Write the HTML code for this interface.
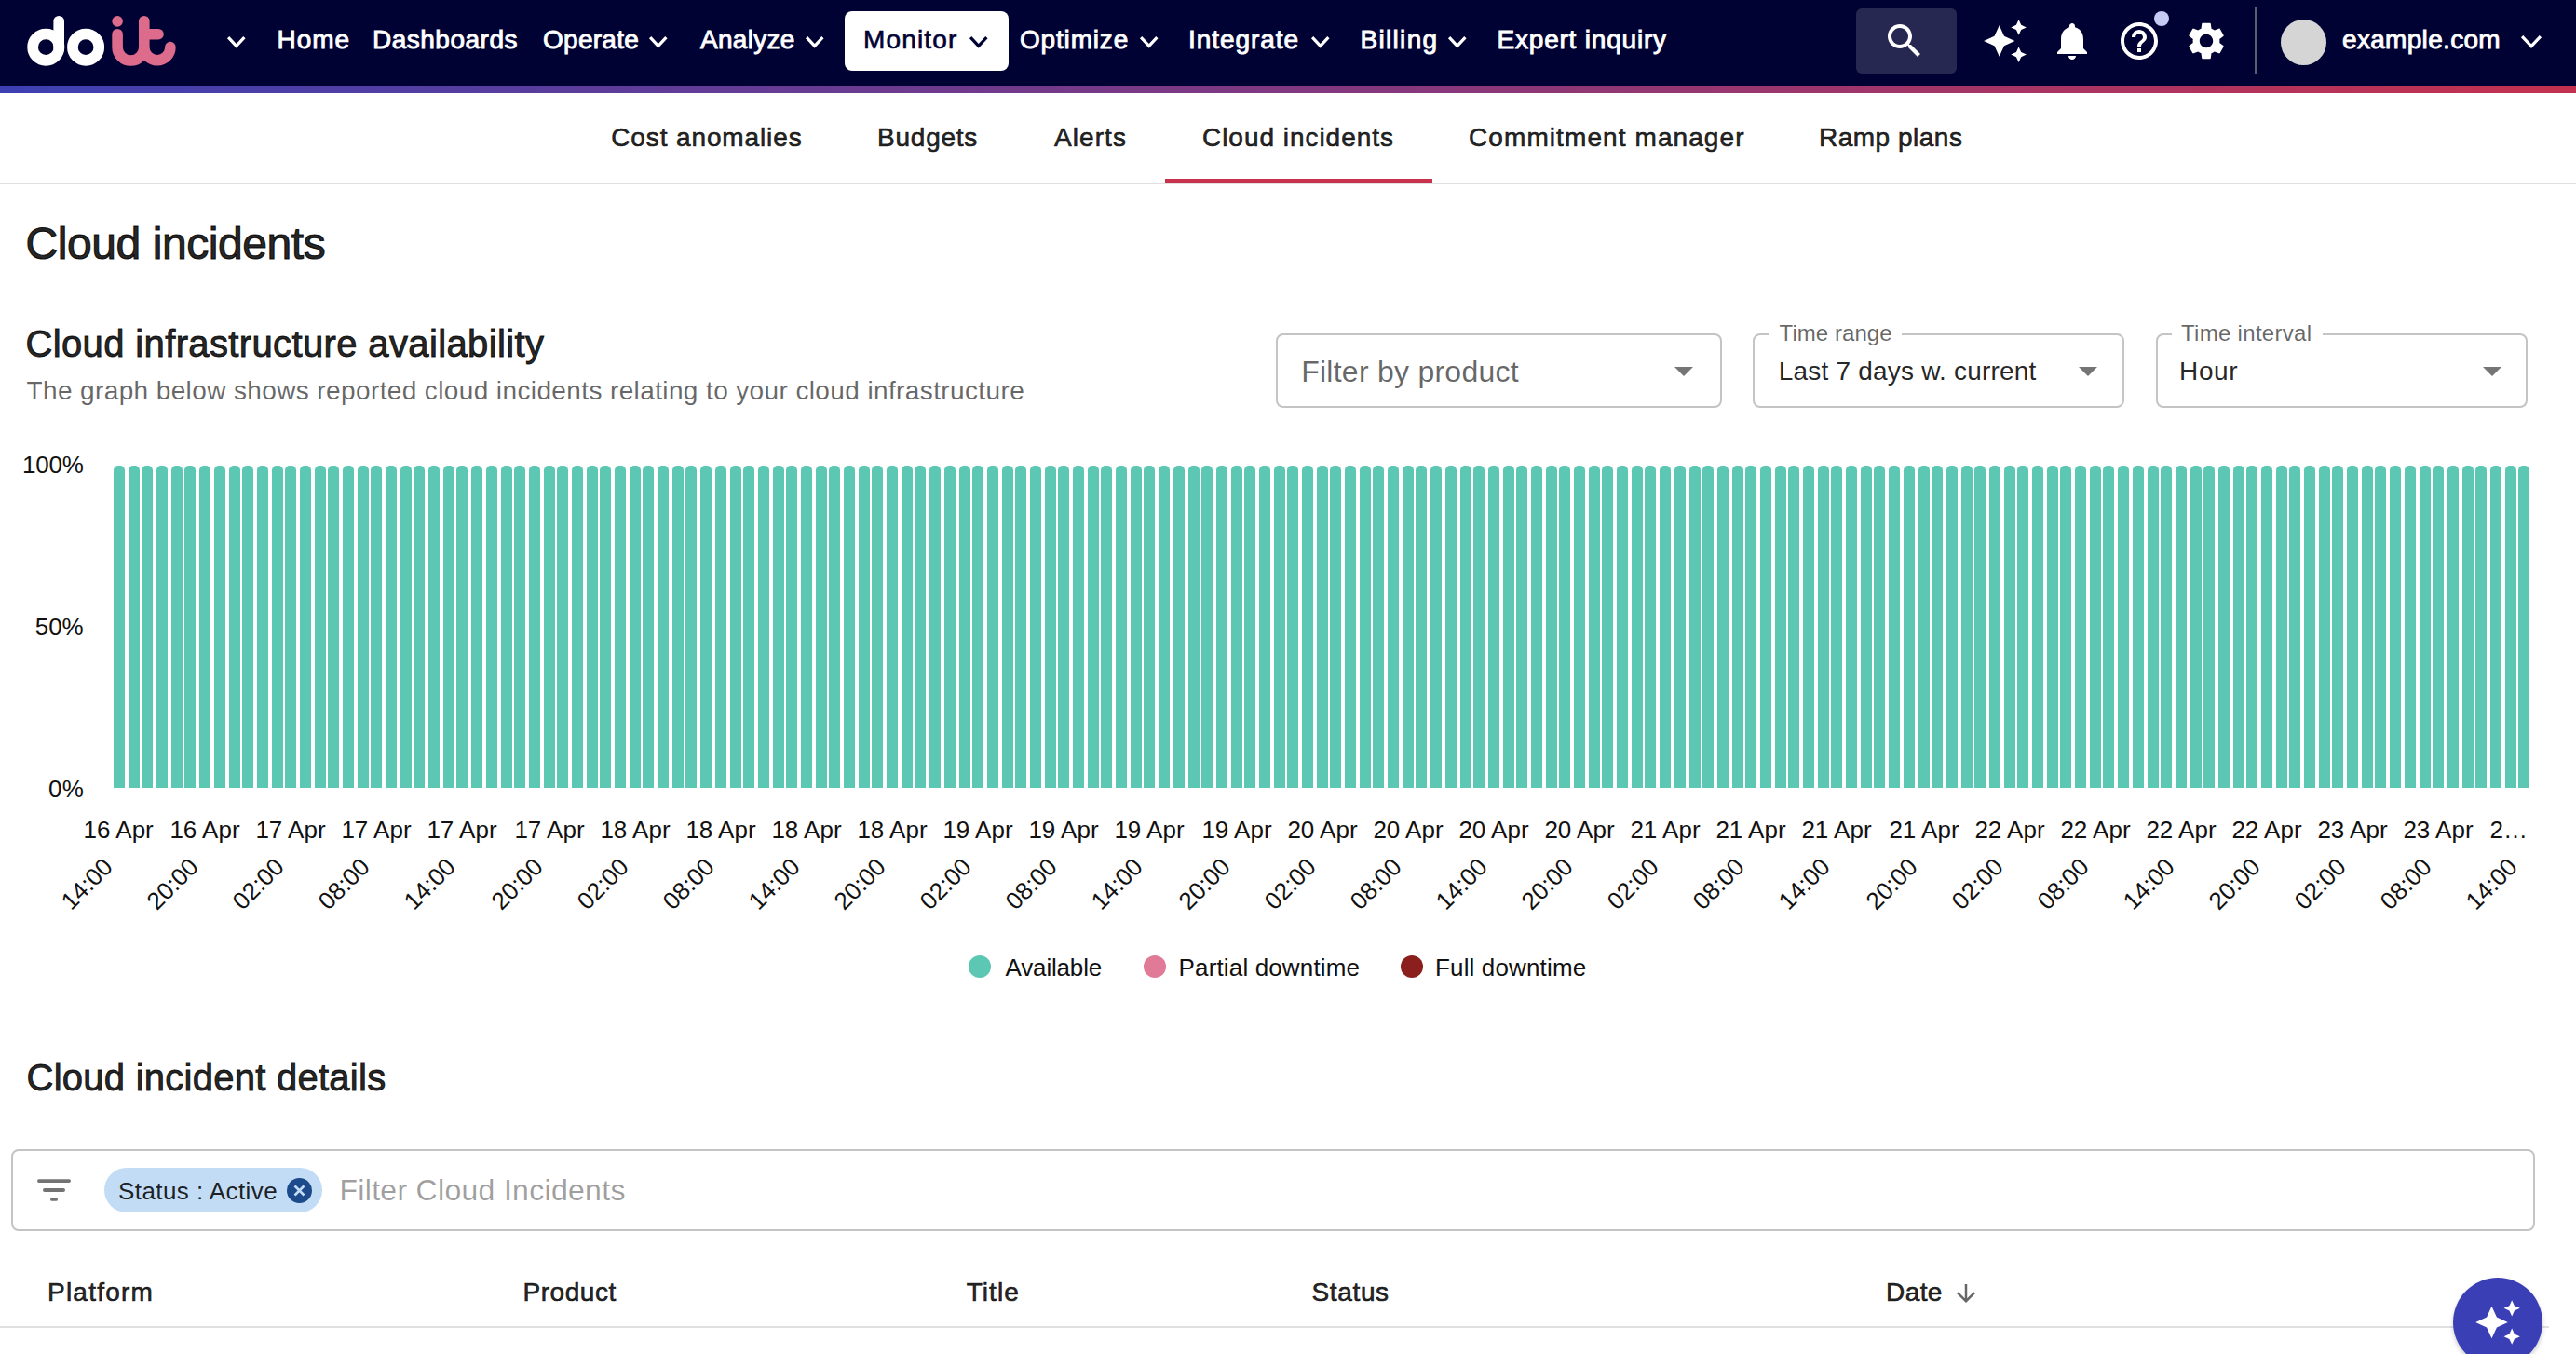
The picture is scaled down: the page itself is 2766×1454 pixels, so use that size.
<!DOCTYPE html><html><head><meta charset="utf-8"><title>Cloud incidents</title><style>
*{margin:0;padding:0;box-sizing:border-box}
html,body{width:2766px;height:1454px;overflow:hidden;background:#fff}
body{position:relative;font-family:"Liberation Sans",sans-serif;color:rgba(0,0,0,0.87)}
.a{position:absolute}
.t{position:absolute;white-space:nowrap;line-height:1}
.nav{position:absolute;left:0;top:0;width:2766px;height:92px;background:#000234}
.grad{position:absolute;left:0;top:92px;width:2766px;height:8px;background:linear-gradient(90deg,#3d40b2 0%,#c4314f 100%)}
.nt{color:#fff;font-size:28px;font-weight:bold}
.med{font-weight:normal;-webkit-text-stroke:0.7px currentColor}
</style></head><body>
<div class="nav"></div><div class="grad"></div>
<svg class="a" style="left:0;top:0" width="200" height="92" viewBox="0 0 200 92">
<g fill="none" stroke-linecap="round" stroke-width="11.6">
<circle cx="49.3" cy="50.65" r="14.2" stroke="#fff"/>
<line x1="63.2" y1="22.7" x2="63.2" y2="52" stroke="#fff"/>
<circle cx="92.1" cy="50.65" r="14.2" stroke="#fff"/>
<path d="M126.1 36.7 V50.65 A14.35 14.35 0 0 0 154.8 50.65 V22.7 M154.8 50.65 A14.05 14.05 0 0 0 182.9 50.65" stroke="#dd6b8b"/>
<line x1="154.8" y1="36.7" x2="170" y2="36.7" stroke="#dd6b8b"/>
</g>
<circle cx="126.1" cy="22.9" r="5.8" fill="#dd6b8b"/>
</svg>
<svg class="a" style="left:241px;top:36px" width="25.5" height="17.7" viewBox="-3 -3 25.5 17.7"><path d="M1.1 1.1 L9.75 10.399999999999999 L18.4 1.1" fill="none" stroke="#fff" stroke-width="3.2"/></svg>
<div id="nav0" class="t" style="left:297.40px;top:29.30px;font-size:28px;font-weight:normal;-webkit-text-stroke:0.90px currentColor;color:#fff;letter-spacing:1.020px;">Home</div>
<div id="nav1" class="t" style="left:400.00px;top:29.30px;font-size:28px;font-weight:normal;-webkit-text-stroke:0.90px currentColor;color:#fff;letter-spacing:0.500px;">Dashboards</div>
<div id="nav2" class="t" style="left:583.00px;top:29.30px;font-size:28px;font-weight:normal;-webkit-text-stroke:0.90px currentColor;color:#fff;letter-spacing:0.270px;">Operate</div>
<svg class="a" style="left:694.2px;top:36px" width="25.5" height="17.7" viewBox="-3 -3 25.5 17.7"><path d="M1.1 1.1 L9.75 10.399999999999999 L18.4 1.1" fill="none" stroke="#fff" stroke-width="3.2"/></svg>
<div id="nav3" class="t" style="left:752.00px;top:29.30px;font-size:28px;font-weight:normal;-webkit-text-stroke:0.90px currentColor;color:#fff;letter-spacing:0.300px;">Analyze</div>
<svg class="a" style="left:862.3px;top:36px" width="25.5" height="17.7" viewBox="-3 -3 25.5 17.7"><path d="M1.1 1.1 L9.75 10.399999999999999 L18.4 1.1" fill="none" stroke="#fff" stroke-width="3.2"/></svg>
<div id="nav4" class="t" style="left:1095.00px;top:29.30px;font-size:28px;font-weight:normal;-webkit-text-stroke:0.90px currentColor;color:#fff;letter-spacing:0.823px;">Optimize</div>
<svg class="a" style="left:1221px;top:36px" width="25.5" height="17.7" viewBox="-3 -3 25.5 17.7"><path d="M1.1 1.1 L9.75 10.399999999999999 L18.4 1.1" fill="none" stroke="#fff" stroke-width="3.2"/></svg>
<div id="nav5" class="t" style="left:1276.00px;top:29.30px;font-size:28px;font-weight:normal;-webkit-text-stroke:0.90px currentColor;color:#fff;letter-spacing:0.956px;">Integrate</div>
<svg class="a" style="left:1405.1px;top:36px" width="25.5" height="17.7" viewBox="-3 -3 25.5 17.7"><path d="M1.1 1.1 L9.75 10.399999999999999 L18.4 1.1" fill="none" stroke="#fff" stroke-width="3.2"/></svg>
<div id="nav6" class="t" style="left:1460.50px;top:29.30px;font-size:28px;font-weight:normal;-webkit-text-stroke:0.90px currentColor;color:#fff;letter-spacing:1.320px;">Billing</div>
<svg class="a" style="left:1551.6px;top:36px" width="25.5" height="17.7" viewBox="-3 -3 25.5 17.7"><path d="M1.1 1.1 L9.75 10.399999999999999 L18.4 1.1" fill="none" stroke="#fff" stroke-width="3.2"/></svg>
<div id="nav7" class="t" style="left:1607.50px;top:29.30px;font-size:28px;font-weight:normal;-webkit-text-stroke:0.90px currentColor;color:#fff;letter-spacing:0.796px;">Expert inquiry</div>
<div class="a" style="left:907px;top:12px;width:176px;height:64px;background:#fff;border-radius:8px"></div>
<div id="navM" class="t" style="left:927.00px;top:29.30px;font-size:28px;font-weight:normal;-webkit-text-stroke:0.64px currentColor;color:#000234;letter-spacing:1.140px;">Monitor</div>
<svg class="a" style="left:1038.2px;top:36px" width="25.5" height="17.7" viewBox="-3 -3 25.5 17.7"><path d="M1.1 1.1 L9.75 10.399999999999999 L18.4 1.1" fill="none" stroke="#000234" stroke-width="3.2"/></svg>
<div class="a" style="left:1993px;top:9px;width:108px;height:70px;background:#272852;border-radius:6px"></div>
<svg class="a" style="left:2021px;top:20px" width="48" height="48" viewBox="0 0 24 24"><path fill="#fff" d="M15.5 14h-.79l-.28-.27C15.41 12.59 16 11.11 16 9.5 16 5.91 13.09 3 9.5 3S3 5.91 3 9.5 5.91 16 9.5 16c1.61 0 3.09-.59 4.23-1.57l.27.28v.79l5 4.99L20.49 19l-4.99-5zm-6 0C7.01 14 5 11.99 5 9.5S7.01 5 9.5 5 14 7.01 14 9.5 11.99 14 9.5 14z"/></svg>
<svg class="a" style="left:2128px;top:19px" width="50" height="50" viewBox="0 0 24 24"><path fill="#fff" d="M19 9l1.25-2.75L23 5l-2.75-1.25L19 1l-1.25 2.75L15 5l2.75 1.25L19 9zm-7.5.5L9 4 6.5 9.5 1 12l5.5 2.5L9 20l2.5-5.5L17 12l-5.5-2.5zM19 15l-1.25 2.75L15 19l2.75 1.25L19 23l1.25-2.75L23 19l-2.75-1.25L19 15z"/></svg>
<svg class="a" style="left:2201px;top:20px" width="48" height="48" viewBox="0 0 24 24"><path fill="#fff" d="M12 22c1.1 0 2-.9 2-2h-4c0 1.1.89 2 2 2zm6-6v-5c0-3.07-1.64-5.64-4.5-6.32V4c0-.83-.67-1.5-1.5-1.5s-1.5.67-1.5 1.5v.68C7.63 5.36 6 7.92 6 11v5l-2 2v1h16v-1l-2-2z"/></svg>
<svg class="a" style="left:2273px;top:20px" width="48" height="48" viewBox="0 0 24 24"><path fill="#fff" d="M11 18h2v-2h-2v2zm1-16C6.48 2 2 6.48 2 12s4.48 10 10 10 10-4.48 10-10S17.52 2 12 2zm0 18c-4.41 0-8-3.59-8-8s3.59-8 8-8 8 3.59 8 8-3.59 8-8 8zm0-14c-2.21 0-4 1.79-4 4h2c0-1.1.9-2 2-2s2 .9 2 2c0 2-3 1.75-3 5h2c0-2.25 3-2.5 3-5 0-2.21-1.79-4-4-4z"/></svg>
<div class="a" style="left:2313px;top:12px;width:16px;height:16px;border-radius:50%;background:#c5cbf5"></div>
<svg class="a" style="left:2345px;top:20px" width="48" height="48" viewBox="0 0 24 24"><path fill="#fff" d="M19.14 12.94c.04-.3.06-.61.06-.94 0-.32-.02-.64-.07-.94l2.03-1.58c.18-.14.23-.41.12-.61l-1.92-3.32c-.12-.22-.37-.29-.59-.22l-2.39.96c-.5-.38-1.03-.7-1.62-.94l-.36-2.54c-.04-.24-.24-.41-.48-.41h-3.84c-.24 0-.43.17-.47.41l-.36 2.54c-.59.24-1.13.57-1.62.94l-2.39-.96c-.22-.08-.47 0-.59.22L2.74 8.87c-.12.21-.08.47.12.61l2.03 1.58c-.05.3-.09.63-.09.94s.02.64.07.94l-2.03 1.58c-.18.14-.23.41-.12.61l1.92 3.32c.12.22.37.29.59.22l2.39-.96c.5.38 1.03.7 1.62.94l.36 2.54c.05.24.24.41.48.41h3.84c.24 0 .44-.17.47-.41l.36-2.54c.59-.24 1.13-.56 1.62-.94l2.39.96c.22.08.47 0 .59-.22l1.92-3.32c.12-.22.07-.47-.12-.61l-2.01-1.58zM12 15.6c-1.98 0-3.6-1.62-3.6-3.6s1.62-3.6 3.6-3.6 3.6 1.62 3.6 3.6-1.62 3.6-3.6 3.6z"/></svg>
<div class="a" style="left:2421px;top:8px;width:2px;height:72px;background:#5e5e6e"></div>
<div class="a" style="left:2449px;top:21px;width:49px;height:49px;border-radius:50%;background:#d5d5d5"></div>
<div id="email" class="t" style="left:2515.00px;top:29.10px;font-size:28px;font-weight:normal;-webkit-text-stroke:0.90px currentColor;color:#fff;letter-spacing:0.315px;">example.com</div>
<svg class="a" style="left:2704px;top:35px" width="28" height="19" viewBox="-3 -3 28 19"><path d="M1.1 1.1 L11.0 11.7 L20.9 1.1" fill="none" stroke="#fff" stroke-width="3.2"/></svg>
<div id="tab0" class="t" style="left:656.20px;top:134.30px;font-size:28px;font-weight:normal;-webkit-text-stroke:0.64px currentColor;color:rgba(0,0,0,0.87);letter-spacing:0.886px;">Cost anomalies</div>
<div id="tab1" class="t" style="left:942.10px;top:134.30px;font-size:28px;font-weight:normal;-webkit-text-stroke:0.64px currentColor;color:rgba(0,0,0,0.87);letter-spacing:0.750px;">Budgets</div>
<div id="tab2" class="t" style="left:1132.00px;top:134.30px;font-size:28px;font-weight:normal;-webkit-text-stroke:0.64px currentColor;color:rgba(0,0,0,0.87);letter-spacing:1.080px;">Alerts</div>
<div id="tab3" class="t" style="left:1291.00px;top:133.90px;font-size:28px;font-weight:normal;-webkit-text-stroke:0.64px currentColor;color:rgba(0,0,0,0.87);letter-spacing:0.964px;">Cloud incidents</div>
<div id="tab4" class="t" style="left:1577.00px;top:134.30px;font-size:28px;font-weight:normal;-webkit-text-stroke:0.64px currentColor;color:rgba(0,0,0,0.87);letter-spacing:1.091px;">Commitment manager</div>
<div id="tab5" class="t" style="left:1953.00px;top:134.30px;font-size:28px;font-weight:normal;-webkit-text-stroke:0.64px currentColor;color:rgba(0,0,0,0.87);letter-spacing:0.500px;">Ramp plans</div>
<div class="a" style="left:1251px;top:192px;width:287px;height:4px;background:#c8324d"></div>
<div class="a" style="left:0;top:196px;width:2766px;height:2px;background:#e0e0e0"></div>
<div id="h1" class="t" style="left:27.50px;top:237.87px;font-size:48px;font-weight:normal;-webkit-text-stroke:1.10px currentColor;color:rgba(0,0,0,0.87);letter-spacing:-0.424px;">Cloud incidents</div>
<div id="h2" class="t" style="left:27.50px;top:348.64px;font-size:40px;font-weight:normal;-webkit-text-stroke:0.92px currentColor;color:rgba(0,0,0,0.87);letter-spacing:0.366px;">Cloud infrastructure availability</div>
<div id="sub" class="t" style="left:28.50px;top:406.30px;font-size:28px;color:rgba(0,0,0,0.6);letter-spacing:0.380px;">The graph below shows reported cloud incidents relating to your cloud infrastructure</div>
<div class="a" style="left:1370px;top:358px;width:479px;height:80px;border:2px solid #c4c4c4;border-radius:8px"></div><div id="s1v" class="t" style="left:1397.20px;top:383.41px;font-size:32px;color:rgba(0,0,0,0.6);letter-spacing:0.253px;">Filter by product</div><svg class="a" style="left:1798px;top:394px" width="20" height="12" viewBox="0 0 20 12"><path d="M0 0 H20 L10 10 Z" fill="rgba(0,0,0,0.54)"/></svg>
<div class="a" style="left:1882px;top:358px;width:399px;height:80px;border:2px solid #c4c4c4;border-radius:8px"></div><div class="a" style="left:1899px;top:350px;width:143px;height:14px;background:#fff"></div><div id="s2l" class="t" style="left:1910.60px;top:345.88px;font-size:24px;color:rgba(0,0,0,0.6);letter-spacing:0.060px;">Time range</div><div id="s2v" class="t" style="left:1909.80px;top:384.80px;font-size:28px;color:rgba(0,0,0,0.87);letter-spacing:0.197px;">Last 7 days w. current</div><svg class="a" style="left:2232px;top:394px" width="20" height="12" viewBox="0 0 20 12"><path d="M0 0 H20 L10 10 Z" fill="rgba(0,0,0,0.54)"/></svg>
<div class="a" style="left:2315px;top:358px;width:399px;height:80px;border:2px solid #c4c4c4;border-radius:8px"></div><div class="a" style="left:2332px;top:350px;width:162px;height:14px;background:#fff"></div><div id="s3l" class="t" style="left:2342.00px;top:345.88px;font-size:24px;color:rgba(0,0,0,0.6);letter-spacing:0.300px;">Time interval</div><div id="s3v" class="t" style="left:2340.00px;top:384.80px;font-size:28px;color:rgba(0,0,0,0.87);letter-spacing:0.660px;">Hour</div><svg class="a" style="left:2666px;top:394px" width="20" height="12" viewBox="0 0 20 12"><path d="M0 0 H20 L10 10 Z" fill="rgba(0,0,0,0.54)"/></svg>
<svg class="a" style="left:0;top:0" width="2766" height="1000"><path fill="#5cc7b3" d="M122 846V505a5 5 0 0 1 5 -5h2a5 5 0 0 1 5 5V846ZM138 846V505a5 5 0 0 1 5 -5h2a5 5 0 0 1 5 5V846ZM152 846V505a5 5 0 0 1 5 -5h2a5 5 0 0 1 5 5V846ZM168 846V505a5 5 0 0 1 5 -5h2a5 5 0 0 1 5 5V846ZM184 846V505a5 5 0 0 1 5 -5h2a5 5 0 0 1 5 5V846ZM198 846V505a5 5 0 0 1 5 -5h2a5 5 0 0 1 5 5V846ZM214 846V505a5 5 0 0 1 5 -5h2a5 5 0 0 1 5 5V846ZM230 846V505a5 5 0 0 1 5 -5h2a5 5 0 0 1 5 5V846ZM246 846V505a5 5 0 0 1 5 -5h2a5 5 0 0 1 5 5V846ZM260 846V505a5 5 0 0 1 5 -5h2a5 5 0 0 1 5 5V846ZM276 846V505a5 5 0 0 1 5 -5h2a5 5 0 0 1 5 5V846ZM292 846V505a5 5 0 0 1 5 -5h2a5 5 0 0 1 5 5V846ZM306 846V505a5 5 0 0 1 5 -5h2a5 5 0 0 1 5 5V846ZM322 846V505a5 5 0 0 1 5 -5h2a5 5 0 0 1 5 5V846ZM338 846V505a5 5 0 0 1 5 -5h2a5 5 0 0 1 5 5V846ZM352 846V505a5 5 0 0 1 5 -5h2a5 5 0 0 1 5 5V846ZM368 846V505a5 5 0 0 1 5 -5h2a5 5 0 0 1 5 5V846ZM384 846V505a5 5 0 0 1 5 -5h2a5 5 0 0 1 5 5V846ZM398 846V505a5 5 0 0 1 5 -5h2a5 5 0 0 1 5 5V846ZM414 846V505a5 5 0 0 1 5 -5h2a5 5 0 0 1 5 5V846ZM430 846V505a5 5 0 0 1 5 -5h2a5 5 0 0 1 5 5V846ZM444 846V505a5 5 0 0 1 5 -5h2a5 5 0 0 1 5 5V846ZM460 846V505a5 5 0 0 1 5 -5h2a5 5 0 0 1 5 5V846ZM476 846V505a5 5 0 0 1 5 -5h2a5 5 0 0 1 5 5V846ZM490 846V505a5 5 0 0 1 5 -5h2a5 5 0 0 1 5 5V846ZM506 846V505a5 5 0 0 1 5 -5h2a5 5 0 0 1 5 5V846ZM522 846V505a5 5 0 0 1 5 -5h2a5 5 0 0 1 5 5V846ZM538 846V505a5 5 0 0 1 5 -5h2a5 5 0 0 1 5 5V846ZM552 846V505a5 5 0 0 1 5 -5h2a5 5 0 0 1 5 5V846ZM568 846V505a5 5 0 0 1 5 -5h2a5 5 0 0 1 5 5V846ZM584 846V505a5 5 0 0 1 5 -5h2a5 5 0 0 1 5 5V846ZM598 846V505a5 5 0 0 1 5 -5h2a5 5 0 0 1 5 5V846ZM614 846V505a5 5 0 0 1 5 -5h2a5 5 0 0 1 5 5V846ZM630 846V505a5 5 0 0 1 5 -5h2a5 5 0 0 1 5 5V846ZM644 846V505a5 5 0 0 1 5 -5h2a5 5 0 0 1 5 5V846ZM660 846V505a5 5 0 0 1 5 -5h2a5 5 0 0 1 5 5V846ZM676 846V505a5 5 0 0 1 5 -5h2a5 5 0 0 1 5 5V846ZM690 846V505a5 5 0 0 1 5 -5h2a5 5 0 0 1 5 5V846ZM706 846V505a5 5 0 0 1 5 -5h2a5 5 0 0 1 5 5V846ZM722 846V505a5 5 0 0 1 5 -5h2a5 5 0 0 1 5 5V846ZM736 846V505a5 5 0 0 1 5 -5h2a5 5 0 0 1 5 5V846ZM752 846V505a5 5 0 0 1 5 -5h2a5 5 0 0 1 5 5V846ZM768 846V505a5 5 0 0 1 5 -5h2a5 5 0 0 1 5 5V846ZM784 846V505a5 5 0 0 1 5 -5h2a5 5 0 0 1 5 5V846ZM798 846V505a5 5 0 0 1 5 -5h2a5 5 0 0 1 5 5V846ZM814 846V505a5 5 0 0 1 5 -5h2a5 5 0 0 1 5 5V846ZM830 846V505a5 5 0 0 1 5 -5h2a5 5 0 0 1 5 5V846ZM844 846V505a5 5 0 0 1 5 -5h2a5 5 0 0 1 5 5V846ZM860 846V505a5 5 0 0 1 5 -5h2a5 5 0 0 1 5 5V846ZM876 846V505a5 5 0 0 1 5 -5h2a5 5 0 0 1 5 5V846ZM890 846V505a5 5 0 0 1 5 -5h2a5 5 0 0 1 5 5V846ZM906 846V505a5 5 0 0 1 5 -5h2a5 5 0 0 1 5 5V846ZM922 846V505a5 5 0 0 1 5 -5h2a5 5 0 0 1 5 5V846ZM936 846V505a5 5 0 0 1 5 -5h2a5 5 0 0 1 5 5V846ZM952 846V505a5 5 0 0 1 5 -5h2a5 5 0 0 1 5 5V846ZM968 846V505a5 5 0 0 1 5 -5h2a5 5 0 0 1 5 5V846ZM982 846V505a5 5 0 0 1 5 -5h2a5 5 0 0 1 5 5V846ZM998 846V505a5 5 0 0 1 5 -5h2a5 5 0 0 1 5 5V846ZM1014 846V505a5 5 0 0 1 5 -5h2a5 5 0 0 1 5 5V846ZM1030 846V505a5 5 0 0 1 5 -5h2a5 5 0 0 1 5 5V846ZM1044 846V505a5 5 0 0 1 5 -5h2a5 5 0 0 1 5 5V846ZM1060 846V505a5 5 0 0 1 5 -5h2a5 5 0 0 1 5 5V846ZM1076 846V505a5 5 0 0 1 5 -5h2a5 5 0 0 1 5 5V846ZM1090 846V505a5 5 0 0 1 5 -5h2a5 5 0 0 1 5 5V846ZM1106 846V505a5 5 0 0 1 5 -5h2a5 5 0 0 1 5 5V846ZM1122 846V505a5 5 0 0 1 5 -5h2a5 5 0 0 1 5 5V846ZM1136 846V505a5 5 0 0 1 5 -5h2a5 5 0 0 1 5 5V846ZM1152 846V505a5 5 0 0 1 5 -5h2a5 5 0 0 1 5 5V846ZM1168 846V505a5 5 0 0 1 5 -5h2a5 5 0 0 1 5 5V846ZM1182 846V505a5 5 0 0 1 5 -5h2a5 5 0 0 1 5 5V846ZM1198 846V505a5 5 0 0 1 5 -5h2a5 5 0 0 1 5 5V846ZM1214 846V505a5 5 0 0 1 5 -5h2a5 5 0 0 1 5 5V846ZM1228 846V505a5 5 0 0 1 5 -5h2a5 5 0 0 1 5 5V846ZM1244 846V505a5 5 0 0 1 5 -5h2a5 5 0 0 1 5 5V846ZM1260 846V505a5 5 0 0 1 5 -5h2a5 5 0 0 1 5 5V846ZM1276 846V505a5 5 0 0 1 5 -5h2a5 5 0 0 1 5 5V846ZM1290 846V505a5 5 0 0 1 5 -5h2a5 5 0 0 1 5 5V846ZM1306 846V505a5 5 0 0 1 5 -5h2a5 5 0 0 1 5 5V846ZM1322 846V505a5 5 0 0 1 5 -5h2a5 5 0 0 1 5 5V846ZM1336 846V505a5 5 0 0 1 5 -5h2a5 5 0 0 1 5 5V846ZM1352 846V505a5 5 0 0 1 5 -5h2a5 5 0 0 1 5 5V846ZM1368 846V505a5 5 0 0 1 5 -5h2a5 5 0 0 1 5 5V846ZM1382 846V505a5 5 0 0 1 5 -5h2a5 5 0 0 1 5 5V846ZM1398 846V505a5 5 0 0 1 5 -5h2a5 5 0 0 1 5 5V846ZM1414 846V505a5 5 0 0 1 5 -5h2a5 5 0 0 1 5 5V846ZM1428 846V505a5 5 0 0 1 5 -5h2a5 5 0 0 1 5 5V846ZM1444 846V505a5 5 0 0 1 5 -5h2a5 5 0 0 1 5 5V846ZM1460 846V505a5 5 0 0 1 5 -5h2a5 5 0 0 1 5 5V846ZM1474 846V505a5 5 0 0 1 5 -5h2a5 5 0 0 1 5 5V846ZM1490 846V505a5 5 0 0 1 5 -5h2a5 5 0 0 1 5 5V846ZM1506 846V505a5 5 0 0 1 5 -5h2a5 5 0 0 1 5 5V846ZM1520 846V505a5 5 0 0 1 5 -5h2a5 5 0 0 1 5 5V846ZM1536 846V505a5 5 0 0 1 5 -5h2a5 5 0 0 1 5 5V846ZM1552 846V505a5 5 0 0 1 5 -5h2a5 5 0 0 1 5 5V846ZM1568 846V505a5 5 0 0 1 5 -5h2a5 5 0 0 1 5 5V846ZM1582 846V505a5 5 0 0 1 5 -5h2a5 5 0 0 1 5 5V846ZM1598 846V505a5 5 0 0 1 5 -5h2a5 5 0 0 1 5 5V846ZM1614 846V505a5 5 0 0 1 5 -5h2a5 5 0 0 1 5 5V846ZM1628 846V505a5 5 0 0 1 5 -5h2a5 5 0 0 1 5 5V846ZM1644 846V505a5 5 0 0 1 5 -5h2a5 5 0 0 1 5 5V846ZM1660 846V505a5 5 0 0 1 5 -5h2a5 5 0 0 1 5 5V846ZM1674 846V505a5 5 0 0 1 5 -5h2a5 5 0 0 1 5 5V846ZM1690 846V505a5 5 0 0 1 5 -5h2a5 5 0 0 1 5 5V846ZM1706 846V505a5 5 0 0 1 5 -5h2a5 5 0 0 1 5 5V846ZM1720 846V505a5 5 0 0 1 5 -5h2a5 5 0 0 1 5 5V846ZM1736 846V505a5 5 0 0 1 5 -5h2a5 5 0 0 1 5 5V846ZM1752 846V505a5 5 0 0 1 5 -5h2a5 5 0 0 1 5 5V846ZM1766 846V505a5 5 0 0 1 5 -5h2a5 5 0 0 1 5 5V846ZM1782 846V505a5 5 0 0 1 5 -5h2a5 5 0 0 1 5 5V846ZM1798 846V505a5 5 0 0 1 5 -5h2a5 5 0 0 1 5 5V846ZM1814 846V505a5 5 0 0 1 5 -5h2a5 5 0 0 1 5 5V846ZM1828 846V505a5 5 0 0 1 5 -5h2a5 5 0 0 1 5 5V846ZM1844 846V505a5 5 0 0 1 5 -5h2a5 5 0 0 1 5 5V846ZM1860 846V505a5 5 0 0 1 5 -5h2a5 5 0 0 1 5 5V846ZM1874 846V505a5 5 0 0 1 5 -5h2a5 5 0 0 1 5 5V846ZM1890 846V505a5 5 0 0 1 5 -5h2a5 5 0 0 1 5 5V846ZM1906 846V505a5 5 0 0 1 5 -5h2a5 5 0 0 1 5 5V846ZM1920 846V505a5 5 0 0 1 5 -5h2a5 5 0 0 1 5 5V846ZM1936 846V505a5 5 0 0 1 5 -5h2a5 5 0 0 1 5 5V846ZM1952 846V505a5 5 0 0 1 5 -5h2a5 5 0 0 1 5 5V846ZM1966 846V505a5 5 0 0 1 5 -5h2a5 5 0 0 1 5 5V846ZM1982 846V505a5 5 0 0 1 5 -5h2a5 5 0 0 1 5 5V846ZM1998 846V505a5 5 0 0 1 5 -5h2a5 5 0 0 1 5 5V846ZM2012 846V505a5 5 0 0 1 5 -5h2a5 5 0 0 1 5 5V846ZM2028 846V505a5 5 0 0 1 5 -5h2a5 5 0 0 1 5 5V846ZM2044 846V505a5 5 0 0 1 5 -5h2a5 5 0 0 1 5 5V846ZM2060 846V505a5 5 0 0 1 5 -5h2a5 5 0 0 1 5 5V846ZM2074 846V505a5 5 0 0 1 5 -5h2a5 5 0 0 1 5 5V846ZM2090 846V505a5 5 0 0 1 5 -5h2a5 5 0 0 1 5 5V846ZM2106 846V505a5 5 0 0 1 5 -5h2a5 5 0 0 1 5 5V846ZM2120 846V505a5 5 0 0 1 5 -5h2a5 5 0 0 1 5 5V846ZM2136 846V505a5 5 0 0 1 5 -5h2a5 5 0 0 1 5 5V846ZM2152 846V505a5 5 0 0 1 5 -5h2a5 5 0 0 1 5 5V846ZM2166 846V505a5 5 0 0 1 5 -5h2a5 5 0 0 1 5 5V846ZM2182 846V505a5 5 0 0 1 5 -5h2a5 5 0 0 1 5 5V846ZM2198 846V505a5 5 0 0 1 5 -5h2a5 5 0 0 1 5 5V846ZM2212 846V505a5 5 0 0 1 5 -5h2a5 5 0 0 1 5 5V846ZM2228 846V505a5 5 0 0 1 5 -5h2a5 5 0 0 1 5 5V846ZM2244 846V505a5 5 0 0 1 5 -5h2a5 5 0 0 1 5 5V846ZM2258 846V505a5 5 0 0 1 5 -5h2a5 5 0 0 1 5 5V846ZM2274 846V505a5 5 0 0 1 5 -5h2a5 5 0 0 1 5 5V846ZM2290 846V505a5 5 0 0 1 5 -5h2a5 5 0 0 1 5 5V846ZM2306 846V505a5 5 0 0 1 5 -5h2a5 5 0 0 1 5 5V846ZM2320 846V505a5 5 0 0 1 5 -5h2a5 5 0 0 1 5 5V846ZM2336 846V505a5 5 0 0 1 5 -5h2a5 5 0 0 1 5 5V846ZM2352 846V505a5 5 0 0 1 5 -5h2a5 5 0 0 1 5 5V846ZM2366 846V505a5 5 0 0 1 5 -5h2a5 5 0 0 1 5 5V846ZM2382 846V505a5 5 0 0 1 5 -5h2a5 5 0 0 1 5 5V846ZM2398 846V505a5 5 0 0 1 5 -5h2a5 5 0 0 1 5 5V846ZM2412 846V505a5 5 0 0 1 5 -5h2a5 5 0 0 1 5 5V846ZM2428 846V505a5 5 0 0 1 5 -5h2a5 5 0 0 1 5 5V846ZM2444 846V505a5 5 0 0 1 5 -5h2a5 5 0 0 1 5 5V846ZM2458 846V505a5 5 0 0 1 5 -5h2a5 5 0 0 1 5 5V846ZM2474 846V505a5 5 0 0 1 5 -5h2a5 5 0 0 1 5 5V846ZM2490 846V505a5 5 0 0 1 5 -5h2a5 5 0 0 1 5 5V846ZM2504 846V505a5 5 0 0 1 5 -5h2a5 5 0 0 1 5 5V846ZM2520 846V505a5 5 0 0 1 5 -5h2a5 5 0 0 1 5 5V846ZM2536 846V505a5 5 0 0 1 5 -5h2a5 5 0 0 1 5 5V846ZM2550 846V505a5 5 0 0 1 5 -5h2a5 5 0 0 1 5 5V846ZM2566 846V505a5 5 0 0 1 5 -5h2a5 5 0 0 1 5 5V846ZM2582 846V505a5 5 0 0 1 5 -5h2a5 5 0 0 1 5 5V846ZM2598 846V505a5 5 0 0 1 5 -5h2a5 5 0 0 1 5 5V846ZM2612 846V505a5 5 0 0 1 5 -5h2a5 5 0 0 1 5 5V846ZM2628 846V505a5 5 0 0 1 5 -5h2a5 5 0 0 1 5 5V846ZM2644 846V505a5 5 0 0 1 5 -5h2a5 5 0 0 1 5 5V846ZM2658 846V505a5 5 0 0 1 5 -5h2a5 5 0 0 1 5 5V846ZM2674 846V505a5 5 0 0 1 5 -5h2a5 5 0 0 1 5 5V846ZM2690 846V505a5 5 0 0 1 5 -5h2a5 5 0 0 1 5 5V846ZM2704 846V505a5 5 0 0 1 5 -5h2a5 5 0 0 1 5 5V846Z"/></svg>
<div id="y100" class="t" style="left:24.00px;top:486.49px;font-size:26px;color:#111;letter-spacing:-0.180px;">100%</div>
<div id="y50" class="t" style="left:37.70px;top:660.09px;font-size:26px;color:#111;letter-spacing:0.000px;">50%</div>
<div id="y0" class="t" style="left:52.00px;top:833.99px;font-size:26px;color:#111;letter-spacing:0.180px;">0%</div>
<div id="xd0" class="t" style="left:82.20px;top:878.49px;font-size:26px;color:#111;letter-spacing:0.000px;width:90px;text-align:center;">16 Apr</div>
<div id="xt0" class="t" style="left:-93px;width:200px;text-align:right;top:917px;font-size:26px;color:#111;transform-origin:100% 0;transform:rotate(-45deg)">14:00</div>
<div id="xd1" class="t" style="left:175.00px;top:878.09px;font-size:26px;color:#111;letter-spacing:0.000px;width:90px;text-align:center;">16 Apr</div>
<div id="xt1" class="t" style="left:-1px;width:200px;text-align:right;top:917px;font-size:26px;color:#111;transform-origin:100% 0;transform:rotate(-45deg)">20:00</div>
<div id="xd2" class="t" style="left:267.00px;top:878.09px;font-size:26px;color:#111;letter-spacing:0.000px;width:90px;text-align:center;">17 Apr</div>
<div id="xt2" class="t" style="left:91px;width:200px;text-align:right;top:917px;font-size:26px;color:#111;transform-origin:100% 0;transform:rotate(-45deg)">02:00</div>
<div id="xd3" class="t" style="left:359.00px;top:878.09px;font-size:26px;color:#111;letter-spacing:0.000px;width:90px;text-align:center;">17 Apr</div>
<div id="xt3" class="t" style="left:183px;width:200px;text-align:right;top:917px;font-size:26px;color:#111;transform-origin:100% 0;transform:rotate(-45deg)">08:00</div>
<div id="xd4" class="t" style="left:451.00px;top:878.09px;font-size:26px;color:#111;letter-spacing:0.000px;width:90px;text-align:center;">17 Apr</div>
<div id="xt4" class="t" style="left:275px;width:200px;text-align:right;top:917px;font-size:26px;color:#111;transform-origin:100% 0;transform:rotate(-45deg)">14:00</div>
<div id="xd5" class="t" style="left:545.00px;top:878.09px;font-size:26px;color:#111;letter-spacing:0.000px;width:90px;text-align:center;">17 Apr</div>
<div id="xt5" class="t" style="left:369px;width:200px;text-align:right;top:917px;font-size:26px;color:#111;transform-origin:100% 0;transform:rotate(-45deg)">20:00</div>
<div id="xd6" class="t" style="left:637.00px;top:878.09px;font-size:26px;color:#111;letter-spacing:0.000px;width:90px;text-align:center;">18 Apr</div>
<div id="xt6" class="t" style="left:461px;width:200px;text-align:right;top:917px;font-size:26px;color:#111;transform-origin:100% 0;transform:rotate(-45deg)">02:00</div>
<div id="xd7" class="t" style="left:729.00px;top:878.09px;font-size:26px;color:#111;letter-spacing:0.000px;width:90px;text-align:center;">18 Apr</div>
<div id="xt7" class="t" style="left:553px;width:200px;text-align:right;top:917px;font-size:26px;color:#111;transform-origin:100% 0;transform:rotate(-45deg)">08:00</div>
<div id="xd8" class="t" style="left:821.00px;top:878.09px;font-size:26px;color:#111;letter-spacing:0.000px;width:90px;text-align:center;">18 Apr</div>
<div id="xt8" class="t" style="left:645px;width:200px;text-align:right;top:917px;font-size:26px;color:#111;transform-origin:100% 0;transform:rotate(-45deg)">14:00</div>
<div id="xd9" class="t" style="left:913.00px;top:878.09px;font-size:26px;color:#111;letter-spacing:0.000px;width:90px;text-align:center;">18 Apr</div>
<div id="xt9" class="t" style="left:737px;width:200px;text-align:right;top:917px;font-size:26px;color:#111;transform-origin:100% 0;transform:rotate(-45deg)">20:00</div>
<div id="xd10" class="t" style="left:1005.00px;top:878.09px;font-size:26px;color:#111;letter-spacing:0.000px;width:90px;text-align:center;">19 Apr</div>
<div id="xt10" class="t" style="left:829px;width:200px;text-align:right;top:917px;font-size:26px;color:#111;transform-origin:100% 0;transform:rotate(-45deg)">02:00</div>
<div id="xd11" class="t" style="left:1097.00px;top:878.09px;font-size:26px;color:#111;letter-spacing:0.000px;width:90px;text-align:center;">19 Apr</div>
<div id="xt11" class="t" style="left:921px;width:200px;text-align:right;top:917px;font-size:26px;color:#111;transform-origin:100% 0;transform:rotate(-45deg)">08:00</div>
<div id="xd12" class="t" style="left:1189.00px;top:878.09px;font-size:26px;color:#111;letter-spacing:0.000px;width:90px;text-align:center;">19 Apr</div>
<div id="xt12" class="t" style="left:1013px;width:200px;text-align:right;top:917px;font-size:26px;color:#111;transform-origin:100% 0;transform:rotate(-45deg)">14:00</div>
<div id="xd13" class="t" style="left:1283.00px;top:878.09px;font-size:26px;color:#111;letter-spacing:0.000px;width:90px;text-align:center;">19 Apr</div>
<div id="xt13" class="t" style="left:1107px;width:200px;text-align:right;top:917px;font-size:26px;color:#111;transform-origin:100% 0;transform:rotate(-45deg)">20:00</div>
<div id="xd14" class="t" style="left:1375.00px;top:878.09px;font-size:26px;color:#111;letter-spacing:0.000px;width:90px;text-align:center;">20 Apr</div>
<div id="xt14" class="t" style="left:1199px;width:200px;text-align:right;top:917px;font-size:26px;color:#111;transform-origin:100% 0;transform:rotate(-45deg)">02:00</div>
<div id="xd15" class="t" style="left:1467.00px;top:878.09px;font-size:26px;color:#111;letter-spacing:0.000px;width:90px;text-align:center;">20 Apr</div>
<div id="xt15" class="t" style="left:1291px;width:200px;text-align:right;top:917px;font-size:26px;color:#111;transform-origin:100% 0;transform:rotate(-45deg)">08:00</div>
<div id="xd16" class="t" style="left:1559.00px;top:878.09px;font-size:26px;color:#111;letter-spacing:0.000px;width:90px;text-align:center;">20 Apr</div>
<div id="xt16" class="t" style="left:1383px;width:200px;text-align:right;top:917px;font-size:26px;color:#111;transform-origin:100% 0;transform:rotate(-45deg)">14:00</div>
<div id="xd17" class="t" style="left:1651.00px;top:878.09px;font-size:26px;color:#111;letter-spacing:0.000px;width:90px;text-align:center;">20 Apr</div>
<div id="xt17" class="t" style="left:1475px;width:200px;text-align:right;top:917px;font-size:26px;color:#111;transform-origin:100% 0;transform:rotate(-45deg)">20:00</div>
<div id="xd18" class="t" style="left:1743.00px;top:878.09px;font-size:26px;color:#111;letter-spacing:0.000px;width:90px;text-align:center;">21 Apr</div>
<div id="xt18" class="t" style="left:1567px;width:200px;text-align:right;top:917px;font-size:26px;color:#111;transform-origin:100% 0;transform:rotate(-45deg)">02:00</div>
<div id="xd19" class="t" style="left:1835.00px;top:878.09px;font-size:26px;color:#111;letter-spacing:0.000px;width:90px;text-align:center;">21 Apr</div>
<div id="xt19" class="t" style="left:1659px;width:200px;text-align:right;top:917px;font-size:26px;color:#111;transform-origin:100% 0;transform:rotate(-45deg)">08:00</div>
<div id="xd20" class="t" style="left:1927.00px;top:878.09px;font-size:26px;color:#111;letter-spacing:0.000px;width:90px;text-align:center;">21 Apr</div>
<div id="xt20" class="t" style="left:1751px;width:200px;text-align:right;top:917px;font-size:26px;color:#111;transform-origin:100% 0;transform:rotate(-45deg)">14:00</div>
<div id="xd21" class="t" style="left:2021.00px;top:878.09px;font-size:26px;color:#111;letter-spacing:0.000px;width:90px;text-align:center;">21 Apr</div>
<div id="xt21" class="t" style="left:1845px;width:200px;text-align:right;top:917px;font-size:26px;color:#111;transform-origin:100% 0;transform:rotate(-45deg)">20:00</div>
<div id="xd22" class="t" style="left:2113.00px;top:878.09px;font-size:26px;color:#111;letter-spacing:0.000px;width:90px;text-align:center;">22 Apr</div>
<div id="xt22" class="t" style="left:1937px;width:200px;text-align:right;top:917px;font-size:26px;color:#111;transform-origin:100% 0;transform:rotate(-45deg)">02:00</div>
<div id="xd23" class="t" style="left:2205.00px;top:878.09px;font-size:26px;color:#111;letter-spacing:0.000px;width:90px;text-align:center;">22 Apr</div>
<div id="xt23" class="t" style="left:2029px;width:200px;text-align:right;top:917px;font-size:26px;color:#111;transform-origin:100% 0;transform:rotate(-45deg)">08:00</div>
<div id="xd24" class="t" style="left:2297.00px;top:878.09px;font-size:26px;color:#111;letter-spacing:0.000px;width:90px;text-align:center;">22 Apr</div>
<div id="xt24" class="t" style="left:2121px;width:200px;text-align:right;top:917px;font-size:26px;color:#111;transform-origin:100% 0;transform:rotate(-45deg)">14:00</div>
<div id="xd25" class="t" style="left:2389.00px;top:878.09px;font-size:26px;color:#111;letter-spacing:0.000px;width:90px;text-align:center;">22 Apr</div>
<div id="xt25" class="t" style="left:2213px;width:200px;text-align:right;top:917px;font-size:26px;color:#111;transform-origin:100% 0;transform:rotate(-45deg)">20:00</div>
<div id="xd26" class="t" style="left:2481.00px;top:878.09px;font-size:26px;color:#111;letter-spacing:0.000px;width:90px;text-align:center;">23 Apr</div>
<div id="xt26" class="t" style="left:2305px;width:200px;text-align:right;top:917px;font-size:26px;color:#111;transform-origin:100% 0;transform:rotate(-45deg)">02:00</div>
<div id="xd27" class="t" style="left:2573.00px;top:878.09px;font-size:26px;color:#111;letter-spacing:0.000px;width:90px;text-align:center;">23 Apr</div>
<div id="xt27" class="t" style="left:2397px;width:200px;text-align:right;top:917px;font-size:26px;color:#111;transform-origin:100% 0;transform:rotate(-45deg)">08:00</div>
<div id="xd28" class="t" style="left:2650.00px;top:878.09px;font-size:26px;color:#111;letter-spacing:0.000px;width:64px;text-align:right;">2…</div>
<div id="xt28" class="t" style="left:2489px;width:200px;text-align:right;top:917px;font-size:26px;color:#111;transform-origin:100% 0;transform:rotate(-45deg)">14:00</div>
<div class="a" style="left:1040px;top:1026px;width:24px;height:24px;border-radius:50%;background:#5cc7b3"></div>
<div id="lg0" class="t" style="left:1079.60px;top:1026.49px;font-size:26px;color:#111;letter-spacing:-0.180px;">Available</div>
<div class="a" style="left:1228px;top:1026px;width:24px;height:24px;border-radius:50%;background:#e07a96"></div>
<div id="lg1" class="t" style="left:1265.60px;top:1026.49px;font-size:26px;color:#111;letter-spacing:0.144px;">Partial downtime</div>
<div class="a" style="left:1504px;top:1026px;width:24px;height:24px;border-radius:50%;background:#8b1f1d"></div>
<div id="lg2" class="t" style="left:1541.00px;top:1026.49px;font-size:26px;color:#111;letter-spacing:0.150px;">Full downtime</div>
<div id="h3" class="t" style="left:28.50px;top:1136.64px;font-size:40px;font-weight:normal;-webkit-text-stroke:0.92px currentColor;color:rgba(0,0,0,0.87);letter-spacing:0.257px;">Cloud incident details</div>
<div class="a" style="left:12px;top:1234px;width:2710px;height:88px;border:2px solid #c4c4c4;border-radius:8px"></div>
<svg class="a" style="left:40px;top:1266px" width="36" height="24" viewBox="0 0 36 24"><g fill="#737373"><rect x="0" y="0.2" width="36" height="3.8" rx="1.9"/><rect x="6" y="10.1" width="24" height="3.8" rx="1.9"/><rect x="14" y="20" width="8" height="3.8" rx="1.9"/></g></svg>
<div class="a" style="left:112px;top:1254px;width:234px;height:48px;border-radius:24px;background:#c2dcf6"></div>
<div id="chip" class="t" style="left:127.00px;top:1266.19px;font-size:26px;color:rgba(0,0,0,0.87);letter-spacing:0.424px;">Status : Active</div>
<div class="a" style="left:308px;top:1265px;width:27px;height:27px;border-radius:50%;background:#1d4a8a"></div>
<svg class="a" style="left:308px;top:1265px" width="27" height="27" viewBox="0 0 27 27"><path d="M8.5 8.5L18.5 18.5M18.5 8.5L8.5 18.5" stroke="#c2dcf6" stroke-width="2.6"/></svg>
<div id="ph" class="t" style="left:364.50px;top:1262.41px;font-size:32px;color:rgba(0,0,0,0.38);letter-spacing:0.300px;">Filter Cloud Incidents</div>
<div id="th0" class="t" style="left:51.00px;top:1374.10px;font-size:28px;font-weight:normal;-webkit-text-stroke:0.64px currentColor;color:rgba(0,0,0,0.87);letter-spacing:1.234px;">Platform</div>
<div id="th1" class="t" style="left:561.50px;top:1374.10px;font-size:28px;font-weight:normal;-webkit-text-stroke:0.64px currentColor;color:rgba(0,0,0,0.87);letter-spacing:0.540px;">Product</div>
<div id="th2" class="t" style="left:1037.80px;top:1373.90px;font-size:28px;font-weight:normal;-webkit-text-stroke:0.64px currentColor;color:rgba(0,0,0,0.87);letter-spacing:1.012px;">Title</div>
<div id="th3" class="t" style="left:1408.50px;top:1374.10px;font-size:28px;font-weight:normal;-webkit-text-stroke:0.64px currentColor;color:rgba(0,0,0,0.87);letter-spacing:0.648px;">Status</div>
<div id="th4" class="t" style="left:2025.00px;top:1374.10px;font-size:28px;font-weight:normal;-webkit-text-stroke:0.64px currentColor;color:rgba(0,0,0,0.87);letter-spacing:0.420px;">Date</div>
<svg class="a" style="left:2096px;top:1374px" width="30" height="30" viewBox="0 0 24 24"><path fill="rgba(0,0,0,0.6)" d="M20 12l-1.41-1.41L13 16.17V4h-2v12.17l-5.58-5.59L4 12l8 8 8-8z"/></svg>
<div class="a" style="left:0;top:1424px;width:2737px;height:2px;background:#e0e0e0"></div>
<div class="a" style="left:2634px;top:1372px;width:96px;height:96px;border-radius:50%;background:#3b3fb6;box-shadow:0 3px 5px rgba(0,0,0,0.2)"></div>
<svg class="a" style="left:2656px;top:1394px" width="52" height="52" viewBox="0 0 24 24"><path fill="#fff" d="M19 9l1.25-2.75L23 5l-2.75-1.25L19 1l-1.25 2.75L15 5l2.75 1.25L19 9zm-7.5.5L9 4 6.5 9.5 1 12l5.5 2.5L9 20l2.5-5.5L17 12l-5.5-2.5zM19 15l-1.25 2.75L15 19l2.75 1.25L19 23l1.25-2.75L23 19l-2.75-1.25L19 15z"/></svg>
<script>(function(){var w=window.innerWidth;if(w&&Math.abs(w-2766)>3){document.documentElement.style.zoom=w/2766;}})();</script>
</body></html>
